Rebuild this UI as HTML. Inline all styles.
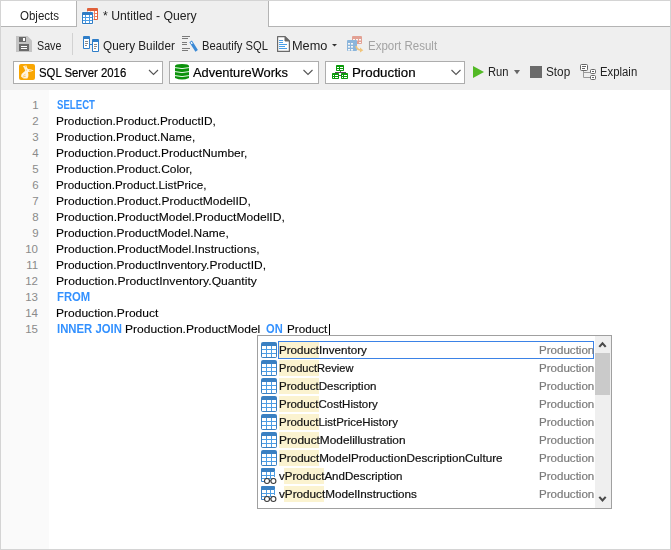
<!DOCTYPE html>
<html><head><meta charset="utf-8">
<style>
html,body{margin:0;padding:0;}
body{width:671px;height:550px;overflow:hidden;position:relative;background:#fff;font-family:"Liberation Sans",sans-serif;}
.a{position:absolute;box-sizing:border-box;}
.t{position:absolute;white-space:pre;transform-origin:0 0;font-family:"Liberation Sans",sans-serif;}
svg{position:absolute;left:0;top:0;}
</style></head><body>
<div style="position:absolute;left:0;top:0;width:1px;height:1px;filter:grayscale(1);"></div>
<!-- frame -->
<div class="a" style="left:0;top:0;width:671px;height:550px;border:1px solid #d4d4d4;"></div>
<!-- tab bar -->
<div class="a" style="left:77px;top:1px;width:191px;height:26px;background:#efefef;"></div>
<div class="a" style="left:76px;top:1px;width:1px;height:26px;background:#b4b4b4;"></div>
<div class="a" style="left:268px;top:1px;width:1px;height:26px;background:#b4b4b4;"></div>
<div class="a" style="left:1px;top:26px;width:76px;height:1px;background:#b4b4b4;"></div>
<div class="a" style="left:268px;top:26px;width:402px;height:1px;background:#b4b4b4;"></div>
<!-- toolbar -->
<div class="a" style="left:1px;top:27px;width:669px;height:63px;background:#efefef;"></div>
<div class="a" style="left:72px;top:33px;width:1px;height:22px;background:#d2d2d2;"></div>
<!-- combos -->
<div class="a" style="left:13px;top:61px;width:150px;height:23px;border:1px solid #adadad;background:#fff;"></div>
<div class="a" style="left:169px;top:61px;width:150px;height:23px;border:1px solid #adadad;background:#fff;"></div>
<div class="a" style="left:325px;top:61px;width:140px;height:23px;border:1px solid #adadad;background:#fff;"></div>
<!-- editor -->
<div class="a" style="left:1px;top:90px;width:48px;height:459px;background:#fafafa;"></div>
<span class="t" style="left:20.00px;top:10px;font-size:12px;line-height:12px;color:#222;font-weight:normal;transform:scaleX(0.9585);">Objects</span>
<span class="t" style="left:103.00px;top:10px;font-size:12px;line-height:12px;color:#222;font-weight:normal;transform:scaleX(1.0185);">* Untitled - Query</span>
<span class="t" style="left:37.31px;top:40px;font-size:12px;line-height:12px;color:#222;font-weight:normal;transform:scaleX(0.8923);">Save</span>
<span class="t" style="left:103.00px;top:40px;font-size:12px;line-height:12px;color:#222;font-weight:normal;transform:scaleX(0.9795);">Query Builder</span>
<span class="t" style="left:201.87px;top:40px;font-size:12px;line-height:12px;color:#222;font-weight:normal;transform:scaleX(0.9314);">Beautify SQL</span>
<span class="t" style="left:291.94px;top:40px;font-size:12px;line-height:12px;color:#222;font-weight:normal;transform:scaleX(1.0625);">Memo</span>
<span class="t" style="left:367.64px;top:40px;font-size:12px;line-height:12px;color:#a3a3a3;font-weight:normal;transform:scaleX(0.9592);">Export Result</span>
<span class="t" style="left:39.43px;top:66px;font-size:13px;line-height:13px;color:#000;font-weight:normal;transform:scaleX(0.8727);-webkit-text-stroke:0.2px #000;">SQL Server 2016</span>
<span class="t" style="left:193.00px;top:66px;font-size:13px;line-height:13px;color:#000;font-weight:normal;transform:scaleX(0.9896);-webkit-text-stroke:0.2px #000;">AdventureWorks</span>
<span class="t" style="left:352.38px;top:66px;font-size:13px;line-height:13px;color:#000;font-weight:normal;transform:scaleX(1.0230);-webkit-text-stroke:0.2px #000;">Production</span>
<span class="t" style="left:488.47px;top:66px;font-size:12px;line-height:12px;color:#222;font-weight:normal;transform:scaleX(0.9333);">Run</span>
<span class="t" style="left:546.02px;top:66px;font-size:12px;line-height:12px;color:#222;font-weight:normal;transform:scaleX(0.9792);">Stop</span>
<span class="t" style="left:600.36px;top:66px;font-size:12px;line-height:12px;color:#222;font-weight:normal;transform:scaleX(0.9447);">Explain</span>
<span class="t" style="left:57.30px;top:99px;font-size:12px;line-height:12px;color:#3391ff;font-weight:bold;transform:scaleX(0.8021);">SELECT</span>
<span class="t" style="left:56.27px;top:116px;font-size:11.5px;line-height:11.5px;color:#000;font-weight:normal;transform:scaleX(1.0292);-webkit-text-stroke:0.1px #000;">Production.Product.ProductID,</span>
<span class="t" style="left:56.27px;top:132px;font-size:11.5px;line-height:11.5px;color:#000;font-weight:normal;transform:scaleX(1.0323);-webkit-text-stroke:0.1px #000;">Production.Product.Name,</span>
<span class="t" style="left:56.26px;top:148px;font-size:11.5px;line-height:11.5px;color:#000;font-weight:normal;transform:scaleX(1.0393);-webkit-text-stroke:0.1px #000;">Production.Product.ProductNumber,</span>
<span class="t" style="left:56.26px;top:164px;font-size:11.5px;line-height:11.5px;color:#000;font-weight:normal;transform:scaleX(1.0411);-webkit-text-stroke:0.1px #000;">Production.Product.Color,</span>
<span class="t" style="left:56.29px;top:180px;font-size:11.5px;line-height:11.5px;color:#000;font-weight:normal;transform:scaleX(1.0150);-webkit-text-stroke:0.1px #000;">Production.Product.ListPrice,</span>
<span class="t" style="left:56.26px;top:196px;font-size:11.5px;line-height:11.5px;color:#000;font-weight:normal;transform:scaleX(1.0438);-webkit-text-stroke:0.1px #000;">Production.Product.ProductModelID,</span>
<span class="t" style="left:56.25px;top:212px;font-size:11.5px;line-height:11.5px;color:#000;font-weight:normal;transform:scaleX(1.0495);-webkit-text-stroke:0.1px #000;">Production.ProductModel.ProductModelID,</span>
<span class="t" style="left:56.26px;top:228px;font-size:11.5px;line-height:11.5px;color:#000;font-weight:normal;transform:scaleX(1.0394);-webkit-text-stroke:0.1px #000;">Production.ProductModel.Name,</span>
<span class="t" style="left:56.25px;top:244px;font-size:11.5px;line-height:11.5px;color:#000;font-weight:normal;transform:scaleX(1.0472);-webkit-text-stroke:0.1px #000;">Production.ProductModel.Instructions,</span>
<span class="t" style="left:56.26px;top:260px;font-size:11.5px;line-height:11.5px;color:#000;font-weight:normal;transform:scaleX(1.0405);-webkit-text-stroke:0.1px #000;">Production.ProductInventory.ProductID,</span>
<span class="t" style="left:56.24px;top:276px;font-size:11.5px;line-height:11.5px;color:#000;font-weight:normal;transform:scaleX(1.0556);-webkit-text-stroke:0.1px #000;">Production.ProductInventory.Quantity</span>
<span class="t" style="left:57.30px;top:291px;font-size:12px;line-height:12px;color:#3391ff;font-weight:bold;transform:scaleX(0.9400);">FROM</span>
<span class="t" style="left:56.25px;top:308px;font-size:11.5px;line-height:11.5px;color:#000;font-weight:normal;transform:scaleX(1.0464);-webkit-text-stroke:0.1px #000;">Production.Product</span>
<span class="t" style="left:57.30px;top:323px;font-size:12px;line-height:12px;color:#3391ff;font-weight:bold;transform:scaleX(0.9441);">INNER JOIN</span>
<span class="t" style="left:125.35px;top:324px;font-size:11.5px;line-height:11.5px;color:#000;font-weight:normal;transform:scaleX(1.0477);-webkit-text-stroke:0.1px #000;">Production.ProductModel</span>
<span class="t" style="left:265.80px;top:323px;font-size:12px;line-height:12px;color:#3391ff;font-weight:bold;transform:scaleX(0.9278);">ON</span>
<span class="t" style="left:286.68px;top:324px;font-size:11.5px;line-height:11.5px;color:#000;font-weight:normal;transform:scaleX(1.0154);-webkit-text-stroke:0.1px #000;">Product</span>
<span class="t" style="left:32.20px;top:100px;font-size:11.5px;line-height:11.5px;color:#8a8a8a;font-weight:normal;transform:scaleX(1.0000);">1</span>
<span class="t" style="left:32.20px;top:116px;font-size:11.5px;line-height:11.5px;color:#8a8a8a;font-weight:normal;transform:scaleX(1.0000);">2</span>
<span class="t" style="left:32.20px;top:132px;font-size:11.5px;line-height:11.5px;color:#8a8a8a;font-weight:normal;transform:scaleX(1.0000);">3</span>
<span class="t" style="left:32.20px;top:148px;font-size:11.5px;line-height:11.5px;color:#8a8a8a;font-weight:normal;transform:scaleX(1.0000);">4</span>
<span class="t" style="left:32.20px;top:164px;font-size:11.5px;line-height:11.5px;color:#8a8a8a;font-weight:normal;transform:scaleX(1.0000);">5</span>
<span class="t" style="left:32.20px;top:180px;font-size:11.5px;line-height:11.5px;color:#8a8a8a;font-weight:normal;transform:scaleX(1.0000);">6</span>
<span class="t" style="left:32.20px;top:196px;font-size:11.5px;line-height:11.5px;color:#8a8a8a;font-weight:normal;transform:scaleX(1.0000);">7</span>
<span class="t" style="left:32.20px;top:212px;font-size:11.5px;line-height:11.5px;color:#8a8a8a;font-weight:normal;transform:scaleX(1.0000);">8</span>
<span class="t" style="left:32.20px;top:228px;font-size:11.5px;line-height:11.5px;color:#8a8a8a;font-weight:normal;transform:scaleX(1.0000);">9</span>
<span class="t" style="left:25.20px;top:244px;font-size:11.5px;line-height:11.5px;color:#8a8a8a;font-weight:normal;transform:scaleX(1.0000);">10</span>
<span class="t" style="left:26.20px;top:260px;font-size:11.5px;line-height:11.5px;color:#8a8a8a;font-weight:normal;transform:scaleX(1.0000);">11</span>
<span class="t" style="left:25.20px;top:276px;font-size:11.5px;line-height:11.5px;color:#8a8a8a;font-weight:normal;transform:scaleX(1.0000);">12</span>
<span class="t" style="left:25.20px;top:292px;font-size:11.5px;line-height:11.5px;color:#8a8a8a;font-weight:normal;transform:scaleX(1.0000);">13</span>
<span class="t" style="left:25.20px;top:308px;font-size:11.5px;line-height:11.5px;color:#8a8a8a;font-weight:normal;transform:scaleX(1.0000);">14</span>
<span class="t" style="left:25.20px;top:324px;font-size:11.5px;line-height:11.5px;color:#8a8a8a;font-weight:normal;transform:scaleX(1.0000);">15</span>
<div class="a" style="left:329px;top:324px;width:1px;height:12px;background:#000;"></div>
<!-- popup -->
<div class="a" style="left:257px;top:335px;width:355px;height:174px;border:1px solid #a0a0a0;background:#fff;z-index:5;">
</div>
<div class="a" style="left:595px;top:336px;width:16px;height:172px;background:#efefef;z-index:6;"></div>
<div class="a" style="left:595px;top:353px;width:15px;height:42px;background:#cacaca;z-index:6;"></div>
<div style="position:absolute;left:0;top:0;z-index:7;">
<div class="a" style="left:279px;top:342px;width:40px;height:16px;background:#fbf3d0;"></div>
<div class="a" style="left:279px;top:360px;width:40px;height:16px;background:#fbf3d0;"></div>
<div class="a" style="left:279px;top:378px;width:40px;height:16px;background:#fbf3d0;"></div>
<div class="a" style="left:279px;top:396px;width:40px;height:16px;background:#fbf3d0;"></div>
<div class="a" style="left:279px;top:414px;width:40px;height:16px;background:#fbf3d0;"></div>
<div class="a" style="left:279px;top:432px;width:40px;height:16px;background:#fbf3d0;"></div>
<div class="a" style="left:279px;top:450px;width:40px;height:16px;background:#fbf3d0;"></div>
<div class="a" style="left:284px;top:468px;width:40px;height:16px;background:#fbf3d0;"></div>
<div class="a" style="left:284px;top:486px;width:40px;height:16px;background:#fbf3d0;"></div>
<div class="a" style="left:278px;top:341px;width:316px;height:18px;border:1px solid #3b82e6;"></div>
<span class="t" style="left:278.94px;top:345px;font-size:11px;line-height:11px;color:#111;transform:scaleX(1.0561);-webkit-text-stroke:0.2px #111;">ProductInventory</span>
<span class="t" style="left:538.5px;top:345px;font-size:11px;line-height:11px;color:#7a7a7a;transform:scaleX(1.0512);-webkit-text-stroke:0.2px #7a7a7a;">Production</span>
<span class="t" style="left:278.99px;top:363px;font-size:11px;line-height:11px;color:#111;transform:scaleX(1.0055);-webkit-text-stroke:0.2px #111;">ProductReview</span>
<span class="t" style="left:538.5px;top:363px;font-size:11px;line-height:11px;color:#7a7a7a;transform:scaleX(1.0512);-webkit-text-stroke:0.2px #7a7a7a;">Production</span>
<span class="t" style="left:278.95px;top:381px;font-size:11px;line-height:11px;color:#111;transform:scaleX(1.0489);-webkit-text-stroke:0.2px #111;">ProductDescription</span>
<span class="t" style="left:538.5px;top:381px;font-size:11px;line-height:11px;color:#7a7a7a;transform:scaleX(1.0512);-webkit-text-stroke:0.2px #7a7a7a;">Production</span>
<span class="t" style="left:278.96px;top:399px;font-size:11px;line-height:11px;color:#111;transform:scaleX(1.0426);-webkit-text-stroke:0.2px #111;">ProductCostHistory</span>
<span class="t" style="left:538.5px;top:399px;font-size:11px;line-height:11px;color:#7a7a7a;transform:scaleX(1.0512);-webkit-text-stroke:0.2px #7a7a7a;">Production</span>
<span class="t" style="left:278.96px;top:417px;font-size:11px;line-height:11px;color:#111;transform:scaleX(1.0398);-webkit-text-stroke:0.2px #111;">ProductListPriceHistory</span>
<span class="t" style="left:538.5px;top:417px;font-size:11px;line-height:11px;color:#7a7a7a;transform:scaleX(1.0512);-webkit-text-stroke:0.2px #7a7a7a;">Production</span>
<span class="t" style="left:278.92px;top:435px;font-size:11px;line-height:11px;color:#111;transform:scaleX(1.0776);-webkit-text-stroke:0.2px #111;">ProductModelillustration</span>
<span class="t" style="left:538.5px;top:435px;font-size:11px;line-height:11px;color:#7a7a7a;transform:scaleX(1.0512);-webkit-text-stroke:0.2px #7a7a7a;">Production</span>
<span class="t" style="left:278.94px;top:453px;font-size:11px;line-height:11px;color:#111;transform:scaleX(1.0595);-webkit-text-stroke:0.2px #111;">ProductModelProductionDescriptionCulture</span>
<span class="t" style="left:538.5px;top:453px;font-size:11px;line-height:11px;color:#7a7a7a;transform:scaleX(1.0512);-webkit-text-stroke:0.2px #7a7a7a;">Production</span>
<span class="t" style="left:279.10px;top:471px;font-size:11px;line-height:11px;color:#111;transform:scaleX(1.0466);-webkit-text-stroke:0.2px #111;">vProductAndDescription</span>
<span class="t" style="left:538.5px;top:471px;font-size:11px;line-height:11px;color:#7a7a7a;transform:scaleX(1.0512);-webkit-text-stroke:0.2px #7a7a7a;">Production</span>
<span class="t" style="left:279.10px;top:489px;font-size:11px;line-height:11px;color:#111;transform:scaleX(1.0643);-webkit-text-stroke:0.2px #111;">vProductModelInstructions</span>
<span class="t" style="left:538.5px;top:489px;font-size:11px;line-height:11px;color:#7a7a7a;transform:scaleX(1.0512);-webkit-text-stroke:0.2px #7a7a7a;">Production</span>
</div>
<svg width="671" height="550" style="z-index:8">
<rect x="87" y="8" width="11" height="12" rx="1" fill="#e0603a"/>
<rect x="88" y="11" width="9" height="8" fill="#f08060"/>
<rect x="88" y="11" width="2" height="2" fill="#fff"/>
<rect x="88" y="14" width="2" height="2" fill="#fff"/>
<rect x="88" y="17" width="2" height="2" fill="#fff"/>
<rect x="91" y="11" width="3" height="2" fill="#fff"/>
<rect x="91" y="14" width="3" height="2" fill="#fff"/>
<rect x="91" y="17" width="3" height="2" fill="#fff"/>
<rect x="95" y="11" width="2" height="2" fill="#fff"/>
<rect x="95" y="14" width="2" height="2" fill="#fff"/>
<rect x="95" y="17" width="2" height="2" fill="#fff"/>
<rect x="81" y="11" width="13" height="14" fill="#f6f8fa" opacity="0.6"/>
<rect x="82" y="12" width="11" height="12" rx="1" fill="#2f7cc4"/>
<rect x="83" y="15" width="9" height="8" fill="#4b9de6"/>
<rect x="83" y="15" width="2" height="2" fill="#fff"/>
<rect x="83" y="18" width="2" height="2" fill="#fff"/>
<rect x="83" y="21" width="2" height="2" fill="#fff"/>
<rect x="86" y="15" width="3" height="2" fill="#fff"/>
<rect x="86" y="18" width="3" height="2" fill="#fff"/>
<rect x="86" y="21" width="3" height="2" fill="#fff"/>
<rect x="90" y="15" width="2" height="2" fill="#fff"/>
<rect x="90" y="18" width="2" height="2" fill="#fff"/>
<rect x="90" y="21" width="2" height="2" fill="#fff"/>
<path d="M16 36H27.5L32 40.5V52H16Z" fill="#c4c4c4"/>
<rect x="19" y="37" width="7" height="5" fill="#6a6a6a"/>
<rect x="23" y="38" width="2" height="3" fill="#fff"/>
<rect x="19" y="44" width="10" height="7" fill="#6a6a6a"/>
<rect x="21" y="46" width="6" height="1" fill="#fff"/>
<rect x="21" y="48" width="6" height="1" fill="#fff"/>
<rect x="83" y="36" width="7" height="13" rx="1" fill="#2f7ec8"/>
<rect x="84" y="39" width="5" height="9" fill="#fff"/>
<rect x="85" y="41" width="3" height="1" fill="#8a8a8a"/>
<rect x="85" y="43" width="3" height="1" fill="#8a8a8a"/>
<rect x="85" y="45" width="2" height="1" fill="#8a8a8a"/>
<rect x="92" y="39" width="7" height="13" rx="1" fill="#2f7ec8"/>
<rect x="93" y="42" width="5" height="9" fill="#fff"/>
<rect x="94" y="44" width="3" height="1" fill="#8a8a8a"/>
<rect x="94" y="46" width="3" height="1" fill="#8a8a8a"/>
<rect x="94" y="48" width="2" height="1" fill="#8a8a8a"/>
<rect x="90" y="44" width="2" height="1" fill="#2f7ec8"/>
<rect x="182" y="36" width="8" height="1" fill="#7a7a7a"/>
<rect x="182" y="38" width="6" height="1" fill="#7a7a7a"/>
<rect x="182" y="42" width="5" height="1" fill="#7a7a7a"/>
<rect x="182" y="44" width="5" height="1" fill="#7a7a7a"/>
<rect x="182" y="48" width="8" height="1" fill="#7a7a7a"/>
<rect x="182" y="50" width="6" height="1" fill="#7a7a7a"/>
<path d="M189.4 42.3L191.9 40.5L197.9 49.9L195.4 51.7Z" fill="#3b8ad6"/>
<rect x="191" y="42" width="1.3" height="2" fill="#fff" transform="rotate(-33 191.6 43)"/>
<path d="M277.6 36.6H285L289.4 41V51.4H277.6Z" fill="#fff" stroke="#6a6a6a" stroke-width="1.2" stroke-linejoin="round"/>
<path d="M285 36.6V41H289.4Z" fill="#6a6a6a" stroke="#6a6a6a" stroke-width="1"/>
<rect x="279" y="40" width="4" height="1" fill="#4a9fe8"/>
<rect x="279" y="42" width="4" height="1" fill="#4a9fe8"/>
<rect x="279" y="44" width="8" height="1" fill="#4a9fe8"/>
<rect x="279" y="46" width="6" height="1" fill="#4a9fe8"/>
<rect x="279" y="48" width="8" height="1" fill="#4a9fe8"/>
<path d="M332 44H337L334.5 46.5Z" fill="#333"/>
<g opacity="0.55">
<rect x="352" y="36" width="10" height="8" rx="1" fill="#d9634a"/>
<rect x="353" y="39" width="2" height="1.5" fill="#fff"/><rect x="356" y="39" width="2" height="1.5" fill="#fff"/><rect x="359" y="39" width="2" height="1.5" fill="#fff"/>
<rect x="359" y="42" width="2" height="1" fill="#fff"/>
<rect x="347" y="40" width="10" height="11" rx="1" fill="#3a86cc"/>
<rect x="348" y="43" width="2" height="1.6" fill="#fff"/>
<rect x="348" y="46" width="2" height="1.6" fill="#fff"/>
<rect x="348" y="49" width="2" height="1.6" fill="#fff"/>
<rect x="351" y="43" width="2" height="1.6" fill="#fff"/>
<rect x="351" y="46" width="2" height="1.6" fill="#fff"/>
<rect x="351" y="49" width="2" height="1.6" fill="#fff"/>
<path d="M356 46Q357 50 361 50" stroke="#f2a21c" stroke-width="1.6" fill="none"/>
<path d="M360 47.5L363.3 50.2L360 52.6Z" fill="#f2a21c"/>
</g>
<rect x="19" y="64" width="16" height="16" rx="2" fill="#f9a602"/>
<path d="M23 66L26.5 65.4L26.9 67.4L28 68.9L31 69.6L33.7 70.3L31.2 71.5L28 71.9L28.4 74.5L28.3 76.5L27.4 78.4L23.5 78.5L21 76.6L21.6 74L25.3 70.8L24.3 68.6Z" fill="#fff" opacity="0.88"/>
<path d="M23.5 75.5L25.5 74.2M22.8 77L25.8 76.2M25.8 69.5L27 70.5M29 70.5L31.5 70.6M24.6 67L26 66.6" stroke="#f9a602" stroke-width="0.7" opacity="0.8" fill="none"/>
<path d="M175 66Q175 64 182 64Q189 64 189 66V78Q182 81.2 175 78Z" fill="#0a920a"/>
<path d="M175 67.6Q182 69.6 189 67.6" stroke="#fff" stroke-width="0.9" fill="none"/>
<path d="M175 71.6Q182 73.6 189 71.6" stroke="#fff" stroke-width="0.9" fill="none"/>
<path d="M175 75.6Q182 77.6 189 75.6" stroke="#fff" stroke-width="0.9" fill="none"/>
<rect x="340" y="70" width="1" height="3" fill="#5c4a5c"/>
<rect x="335" y="72" width="11" height="1" fill="#5c4a5c"/>
<rect x="338" y="75" width="4" height="1" fill="#5c4a5c"/>
<rect x="336" y="65" width="8" height="6" rx="0.7" fill="#0b9a0b"/>
<rect x="337" y="67" width="2" height="1" fill="#fff"/><rect x="340" y="67" width="3" height="1" fill="#fff"/>
<rect x="337" y="69" width="2" height="1" fill="#fff"/><rect x="340" y="69" width="3" height="1" fill="#fff"/>
<rect x="332" y="73" width="7" height="6" rx="0.7" fill="#0b9a0b"/>
<rect x="333" y="75" width="1" height="1" fill="#fff"/><rect x="335" y="75" width="3" height="1" fill="#fff"/>
<rect x="333" y="77" width="1" height="1" fill="#fff"/><rect x="335" y="77" width="3" height="1" fill="#fff"/>
<rect x="341" y="73" width="7" height="6" rx="0.7" fill="#0b9a0b"/>
<rect x="342" y="75" width="1" height="1" fill="#fff"/><rect x="344" y="75" width="3" height="1" fill="#fff"/>
<rect x="342" y="77" width="1" height="1" fill="#fff"/><rect x="344" y="77" width="3" height="1" fill="#fff"/>
<path d="M149 70L153.5 74.5L158 70" stroke="#555" stroke-width="1.1" fill="none"/>
<path d="M303.5 70L308.0 74.5L312.5 70" stroke="#555" stroke-width="1.1" fill="none"/>
<path d="M451.5 70L456.0 74.5L460.5 70" stroke="#555" stroke-width="1.1" fill="none"/>
<path d="M473 66L484 72L473 78Z" fill="#52b925"/>
<path d="M514 70H520L517 74.2Z" fill="#666"/>
<rect x="530" y="66" width="12" height="12" fill="#6b6b6b"/>
<path d="M583.5 71V77.5H590M583.5 72.5H590" stroke="#9a9a9a" fill="none"/>
<rect x="580.5" y="64.5" width="7" height="6" rx="1" fill="#fff" stroke="#666"/>
<rect x="582" y="66" width="4" height="1" fill="#666"/><rect x="582" y="68" width="3" height="1" fill="#666"/>
<rect x="590.5" y="69.5" width="5" height="4" rx="1" fill="#fff" stroke="#666"/>
<rect x="592" y="71" width="2" height="1" fill="#666"/>
<rect x="590.5" y="75.5" width="5" height="4" rx="1" fill="#fff" stroke="#666"/>
<rect x="592" y="77" width="2" height="1" fill="#666"/>
<rect x="261" y="342" width="16" height="16" rx="2" fill="#3a80c2"/>
<rect x="262" y="346" width="14" height="11" fill="#4c9de4"/>
<rect x="262" y="346" width="4" height="3" fill="#fff"/>
<rect x="262" y="350" width="4" height="3" fill="#fff"/>
<rect x="262" y="354" width="4" height="3" fill="#fff"/>
<rect x="267" y="346" width="4" height="3" fill="#fff"/>
<rect x="267" y="350" width="4" height="3" fill="#fff"/>
<rect x="267" y="354" width="4" height="3" fill="#fff"/>
<rect x="272" y="346" width="4" height="3" fill="#fff"/>
<rect x="272" y="350" width="4" height="3" fill="#fff"/>
<rect x="272" y="354" width="4" height="3" fill="#fff"/>
<rect x="261" y="360" width="16" height="16" rx="2" fill="#3a80c2"/>
<rect x="262" y="364" width="14" height="11" fill="#4c9de4"/>
<rect x="262" y="364" width="4" height="3" fill="#fff"/>
<rect x="262" y="368" width="4" height="3" fill="#fff"/>
<rect x="262" y="372" width="4" height="3" fill="#fff"/>
<rect x="267" y="364" width="4" height="3" fill="#fff"/>
<rect x="267" y="368" width="4" height="3" fill="#fff"/>
<rect x="267" y="372" width="4" height="3" fill="#fff"/>
<rect x="272" y="364" width="4" height="3" fill="#fff"/>
<rect x="272" y="368" width="4" height="3" fill="#fff"/>
<rect x="272" y="372" width="4" height="3" fill="#fff"/>
<rect x="261" y="378" width="16" height="16" rx="2" fill="#3a80c2"/>
<rect x="262" y="382" width="14" height="11" fill="#4c9de4"/>
<rect x="262" y="382" width="4" height="3" fill="#fff"/>
<rect x="262" y="386" width="4" height="3" fill="#fff"/>
<rect x="262" y="390" width="4" height="3" fill="#fff"/>
<rect x="267" y="382" width="4" height="3" fill="#fff"/>
<rect x="267" y="386" width="4" height="3" fill="#fff"/>
<rect x="267" y="390" width="4" height="3" fill="#fff"/>
<rect x="272" y="382" width="4" height="3" fill="#fff"/>
<rect x="272" y="386" width="4" height="3" fill="#fff"/>
<rect x="272" y="390" width="4" height="3" fill="#fff"/>
<rect x="261" y="396" width="16" height="16" rx="2" fill="#3a80c2"/>
<rect x="262" y="400" width="14" height="11" fill="#4c9de4"/>
<rect x="262" y="400" width="4" height="3" fill="#fff"/>
<rect x="262" y="404" width="4" height="3" fill="#fff"/>
<rect x="262" y="408" width="4" height="3" fill="#fff"/>
<rect x="267" y="400" width="4" height="3" fill="#fff"/>
<rect x="267" y="404" width="4" height="3" fill="#fff"/>
<rect x="267" y="408" width="4" height="3" fill="#fff"/>
<rect x="272" y="400" width="4" height="3" fill="#fff"/>
<rect x="272" y="404" width="4" height="3" fill="#fff"/>
<rect x="272" y="408" width="4" height="3" fill="#fff"/>
<rect x="261" y="414" width="16" height="16" rx="2" fill="#3a80c2"/>
<rect x="262" y="418" width="14" height="11" fill="#4c9de4"/>
<rect x="262" y="418" width="4" height="3" fill="#fff"/>
<rect x="262" y="422" width="4" height="3" fill="#fff"/>
<rect x="262" y="426" width="4" height="3" fill="#fff"/>
<rect x="267" y="418" width="4" height="3" fill="#fff"/>
<rect x="267" y="422" width="4" height="3" fill="#fff"/>
<rect x="267" y="426" width="4" height="3" fill="#fff"/>
<rect x="272" y="418" width="4" height="3" fill="#fff"/>
<rect x="272" y="422" width="4" height="3" fill="#fff"/>
<rect x="272" y="426" width="4" height="3" fill="#fff"/>
<rect x="261" y="432" width="16" height="16" rx="2" fill="#3a80c2"/>
<rect x="262" y="436" width="14" height="11" fill="#4c9de4"/>
<rect x="262" y="436" width="4" height="3" fill="#fff"/>
<rect x="262" y="440" width="4" height="3" fill="#fff"/>
<rect x="262" y="444" width="4" height="3" fill="#fff"/>
<rect x="267" y="436" width="4" height="3" fill="#fff"/>
<rect x="267" y="440" width="4" height="3" fill="#fff"/>
<rect x="267" y="444" width="4" height="3" fill="#fff"/>
<rect x="272" y="436" width="4" height="3" fill="#fff"/>
<rect x="272" y="440" width="4" height="3" fill="#fff"/>
<rect x="272" y="444" width="4" height="3" fill="#fff"/>
<rect x="261" y="450" width="16" height="16" rx="2" fill="#3a80c2"/>
<rect x="262" y="454" width="14" height="11" fill="#4c9de4"/>
<rect x="262" y="454" width="4" height="3" fill="#fff"/>
<rect x="262" y="458" width="4" height="3" fill="#fff"/>
<rect x="262" y="462" width="4" height="3" fill="#fff"/>
<rect x="267" y="454" width="4" height="3" fill="#fff"/>
<rect x="267" y="458" width="4" height="3" fill="#fff"/>
<rect x="267" y="462" width="4" height="3" fill="#fff"/>
<rect x="272" y="454" width="4" height="3" fill="#fff"/>
<rect x="272" y="458" width="4" height="3" fill="#fff"/>
<rect x="272" y="462" width="4" height="3" fill="#fff"/>
<rect x="261" y="468" width="14" height="4" rx="1" fill="#3a80c2"/>
<path d="M261.5 471V481.5H264" stroke="#3a80c2" fill="none"/>
<path d="M274.5 471V477" stroke="#4c9de4" fill="none"/>
<rect x="262" y="475" width="13" height="1" fill="#4c9de4"/>
<rect x="262" y="478" width="13" height="1" fill="#4c9de4"/>
<rect x="266" y="472" width="1" height="6" fill="#4c9de4"/>
<rect x="270" y="472" width="1" height="6" fill="#4c9de4"/>
<circle cx="267" cy="481" r="2.5" stroke="#3a3a3a" stroke-width="1.1" fill="#fff"/>
<circle cx="273.4" cy="481" r="2.5" stroke="#3a3a3a" stroke-width="1.1" fill="#fff"/>
<rect x="269.5" y="480.3" width="1.4" height="0.9" fill="#3a3a3a"/>
<rect x="261" y="486" width="14" height="4" rx="1" fill="#3a80c2"/>
<path d="M261.5 489V499.5H264" stroke="#3a80c2" fill="none"/>
<path d="M274.5 489V495" stroke="#4c9de4" fill="none"/>
<rect x="262" y="493" width="13" height="1" fill="#4c9de4"/>
<rect x="262" y="496" width="13" height="1" fill="#4c9de4"/>
<rect x="266" y="490" width="1" height="6" fill="#4c9de4"/>
<rect x="270" y="490" width="1" height="6" fill="#4c9de4"/>
<circle cx="267" cy="499" r="2.5" stroke="#3a3a3a" stroke-width="1.1" fill="#fff"/>
<circle cx="273.4" cy="499" r="2.5" stroke="#3a3a3a" stroke-width="1.1" fill="#fff"/>
<rect x="269.5" y="498.3" width="1.4" height="0.9" fill="#3a3a3a"/>
<path d="M599.3 346.9L602.5 343.3L605.7 346.9" stroke="#4a4a4a" stroke-width="2.1" fill="none"/>
<path d="M599.3 496.9L602.5 500.5L605.7 496.9" stroke="#4a4a4a" stroke-width="2.1" fill="none"/>
</svg>
</body></html>
